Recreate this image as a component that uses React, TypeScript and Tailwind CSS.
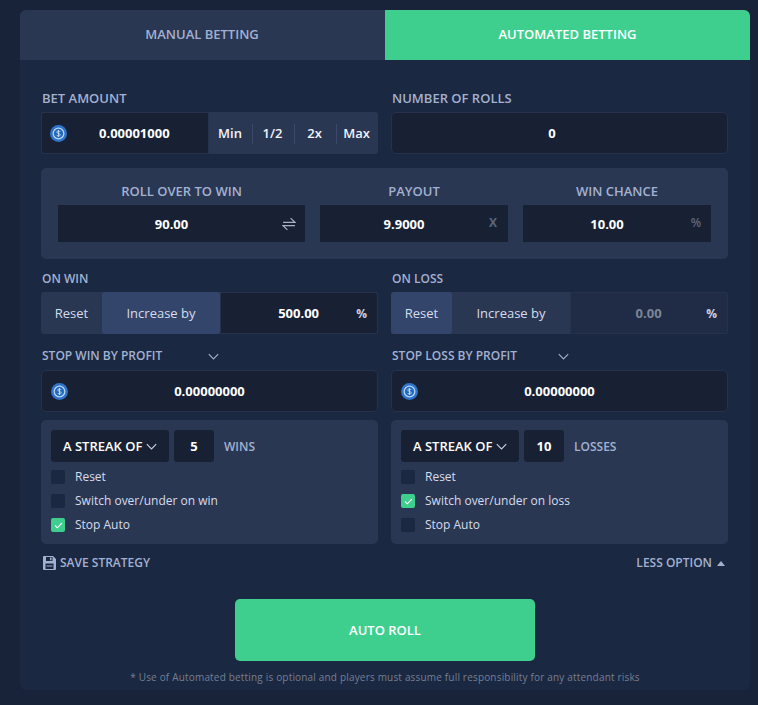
import React from 'react';

const UsdcIcon = () => (
  <svg width="17" height="17" viewBox="0 0 32 32" className="shrink-0">
    <circle cx="16" cy="16" r="16" fill="#2f74c8" />
    <circle cx="16" cy="16" r="10" fill="#2468b8" stroke="#b9d6f5" strokeWidth="2.4" />
    <path d="M19.2 13c-.5-1.2-1.6-1.8-3.2-1.8-1.8 0-3 .9-3 2.3 0 3.2 6.2 1.7 6.2 4.9 0 1.5-1.4 2.4-3.2 2.4-1.6 0-2.9-.7-3.3-2M16 9.4v13.2" fill="none" stroke="#cfe3f8" strokeWidth="1.6" />
  </svg>
);

const Chevron = ({ className }: { className: string }) => (
  <svg viewBox="0 0 14 8" fill="none" stroke="currentColor" strokeWidth="1.4" className={className}>
    <path d="M1 1l6 6 6-6" />
  </svg>
);

const Label = ({ children }: { children: React.ReactNode }) => (
  <div className="h-[14px] pl-[1px] leading-[14px] text-[12px] font-semibold text-[#a3b1d1]">{children}</div>
);

const Check = ({ checked, label }: { checked?: boolean; label: string }) => (
  <div className="flex items-center h-[14px] gap-[10px]">
    {checked ? (
      <div className="w-[14px] h-[14px] rounded-[2px] bg-[#3ecf8e] flex items-center justify-center">
        <svg width="9" height="7" viewBox="0 0 9 7" fill="none" stroke="#fff" strokeWidth="1.1">
          <path d="M1 3.5l2.3 2.3L8 1" />
        </svg>
      </div>
    ) : (
      <div className="w-[14px] h-[14px] rounded-[2px] bg-[#1b2841]" />
    )}
    <span className="text-[12px] text-[#d5dcec]">{label}</span>
  </div>
);

const Segment = ({ active, value, dim }: { active: 'reset' | 'increase'; value: string; dim?: boolean }) => (
  <div className="flex h-[42px] rounded-[3px] bg-[#2a3753] text-[13px] text-[#d5dcec]">
    <div className={`w-[61px] shrink-0 pt-[1px] flex items-center justify-center rounded-[3px] ${active === 'reset' ? 'bg-[#33456a]' : ''}`}>Reset</div>
    <div className={`w-[118px] shrink-0 pt-[1px] flex items-center justify-center rounded-[3px] ${active === 'increase' ? 'bg-[#33456a]' : ''}`}>Increase by</div>
    <div className={`flex-1 min-w-0 pt-[1px] flex items-center border border-[#26324c] rounded-r-[3px] ${dim ? 'bg-[#202c46]' : 'bg-[#182133]'}`}>
      <span className={`w-[136px] pl-[20px] text-center font-bold text-[13px] ${dim ? 'text-[#7b8598]' : 'text-white'}`}>{value}</span>
      <span className="flex-1 pr-[10px] text-right font-bold text-[12px] text-[#c9d1e3]">%</span>
    </div>
  </div>
);

const ProfitInput = () => (
  <div className="relative h-[42px] pt-[1px] rounded-[5px] bg-[#182133] border border-[#26324c] flex items-center justify-center">
    <span className="absolute left-[9px] top-[12px] flex"><UsdcIcon /></span>
    <span className="text-[13px] font-bold text-white">0.00000000</span>
  </div>
);

const Streak = ({ value, unit, checks }: { value: string; unit: string; checks: [string, boolean][] }) => (
  <div className="h-[124px] rounded-[5px] bg-[#2a3753] pt-[10px] pl-[10px]">
    <div className="flex h-[32px] items-stretch gap-[5px] mb-[8px]">
      <div className="w-[118px] pt-[1px] rounded-[3px] bg-[#182133] flex items-center pl-[12px] gap-[4px] text-[13px] font-semibold text-white">
        A STREAK OF <Chevron className="w-[11px] h-[7px] text-[#c9d1e3]" />
      </div>
      <div className="w-[40px] pt-[1px] rounded-[3px] bg-[#182133] flex items-center justify-center text-[13px] font-bold text-white">{value}</div>
      <div className="ml-[5px] pt-[1px] flex items-center text-[12px] font-semibold text-[#a3b1d1]">{unit}</div>
    </div>
    <div className="flex flex-col gap-[10px]">
      {checks.map(([label, checked]) => (
        <Check key={label} label={label} checked={checked} />
      ))}
    </div>
  </div>
);

const OddsField = ({ title, value, width, suffix }: { title: string; value: string; width: string; suffix: React.ReactNode }) => (
  <div className={width}>
    <div className="h-[14px] leading-[14px] text-center text-[13px] font-semibold text-[#a3b1d1] mb-[7px]">{title}</div>
    <div className="relative h-[37px] pt-[2px] bg-[#182133] flex items-center justify-center pr-[20px]">
      <span className="text-[13px] font-bold text-white">{value}</span>
      <span className="absolute right-[10px] top-[9px] text-[12px] font-semibold text-[#5c667c]">{suffix}</span>
    </div>
  </div>
);

export default function App() {
  return (
    <div className="w-[758px] h-[705px] bg-[#18233a] pt-[10px] pl-[20px] font-['Open_Sans',sans-serif] overflow-hidden">
      <div className="w-[730px] h-[680px] rounded-[6px] bg-[#1b2841] overflow-hidden">
        {/* tabs */}
        <div className="flex h-[50px] text-[13px] font-semibold">
          <div className="w-[365px] bg-[#2a3753] flex items-center justify-center pr-[1px] text-[#a3b1d1]">MANUAL BETTING</div>
          <div className="w-[365px] bg-[#3ecf8e] flex items-center justify-center text-white">AUTOMATED BETTING</div>
        </div>

        <div className="pl-[21px] pr-[22px] pt-[31px]">
          <div className="grid grid-cols-[337px_337px] gap-x-[13px]">
            <div>
              <div className="h-[14px] pl-[1px] leading-[14px] text-[13px] font-semibold text-[#a3b1d1]">BET AMOUNT</div>
              <div className="mt-[7px] flex h-[42px] rounded-[3px] bg-[#2a3753]">
                <div className="w-[168px] pt-[1px] bg-[#182133] border border-[#26324c] rounded-l-[3px] flex items-center pl-[8px]">
                  <UsdcIcon />
                  <span className="ml-[32px] text-[13px] font-bold text-white">0.00001000</span>
                </div>
                <div className="flex-1 pt-[1px] flex items-center pl-[1px] text-[13px] font-semibold text-[#f0f3f9]">
                  {['Min', '1/2', '2x', 'Max'].map((t, i) => (
                    <div key={t} className={`w-[42px] h-[20px] pr-[2px] flex items-center justify-center ${i > 0 ? 'border-l border-[#3b4868]' : ''}`}>
                      {t}
                    </div>
                  ))}
                </div>
              </div>
            </div>
            <div>
              <div className="h-[14px] pl-[1px] leading-[14px] text-[13px] font-semibold text-[#a3b1d1]">NUMBER OF ROLLS</div>
              <div className="mt-[7px] h-[42px] pt-[1px] rounded-[5px] bg-[#182133] border border-[#26324c] flex items-center justify-center pr-[15px] text-[13px] font-bold text-white">0</div>
            </div>
          </div>

          {/* roll over / payout / chance */}
          <div className="mt-[14px] h-[91px] rounded-[5px] bg-[#2a3753] pt-[16px] pl-[17px] flex gap-[15px]">
            <OddsField
              title="ROLL OVER TO WIN"
              value="90.00"
              width="w-[247px]"
              suffix={
                <svg width="14" height="14" viewBox="0 0 13 13" fill="none" stroke="#a9b1c0" strokeWidth="1.1" className="mt-[3px] -mr-[1px]">
                  <path d="M1 5h11L8 1M12 8H1l4 4" />
                </svg>
              }
            />
            <OddsField title="PAYOUT" value="9.9000" width="w-[188px]" suffix={<span className="mr-[1px] font-bold">X</span>} />
            <OddsField title="WIN CHANCE" value="10.00" width="w-[188px]" suffix="%" />
          </div>

          <div className="mt-[13px] grid grid-cols-[337px_337px] gap-x-[13px]">
            <div>
              <Label>ON WIN</Label>
              <div className="mt-[6px]"><Segment active="increase" value="500.00" /></div>
              <div className="mt-[15px] h-[14px] flex items-center">
                <Label>STOP WIN BY PROFIT</Label>
                <Chevron className="ml-[46px] w-[11px] h-[7px] text-[#a3b1d1]" />
              </div>
              <div className="mt-[7px]"><ProfitInput /></div>
              <div className="mt-[8px]">
                <Streak value="5" unit="WINS" checks={[['Reset', false], ['Switch over/under on win', false], ['Stop Auto', true]]} />
              </div>
            </div>
            <div>
              <Label>ON LOSS</Label>
              <div className="mt-[6px]"><Segment active="reset" value="0.00" dim /></div>
              <div className="mt-[15px] h-[14px] flex items-center">
                <Label>STOP LOSS BY PROFIT</Label>
                <Chevron className="ml-[41px] w-[11px] h-[7px] text-[#a3b1d1]" />
              </div>
              <div className="mt-[7px]"><ProfitInput /></div>
              <div className="mt-[8px]">
                <Streak value="10" unit="LOSSES" checks={[['Reset', false], ['Switch over/under on loss', true], ['Stop Auto', false]]} />
              </div>
            </div>
          </div>

          <div className="mt-[12px] flex justify-between items-center h-[14px] text-[12px] font-semibold text-[#a3b1d1]">
            <div className="flex items-center gap-[4px] pl-[2px]">
              <svg width="13" height="14" viewBox="0 0 13 14" fill="#a3b1d1">
                <path fillRule="evenodd" d="M1 0h9l3 3v10a1 1 0 0 1-1 1H1a1 1 0 0 1-1-1V1a1 1 0 0 1 1-1zm2 1v4h6.5V1zM7 1.6h1.5v2.6H7zM2.5 7.5v5.5h8V7.5zM3.5 9.4h6v1.2h-6z" />
              </svg>
              SAVE STRATEGY
            </div>
            <div className="flex items-center gap-[5px] pr-[3px]">
              LESS OPTION
              <svg width="8" height="5" viewBox="0 0 8 5" fill="#a3b1d1">
                <path d="M4 0l4 5H0z" />
              </svg>
            </div>
          </div>
        </div>

        <div className="mt-[29px] flex justify-center">
          <div className="w-[300px] h-[62px] pt-[1px] rounded-[5px] bg-[#3ecf8e] flex items-center justify-center text-[13px] font-semibold text-white">AUTO ROLL</div>
        </div>
        <div className="mt-[9px] text-center text-[10px] leading-[14px] tracking-[0.18px] text-[#757f93]">
          * Use of Automated betting is optional and players must assume full responsibility for any attendant risks
        </div>
      </div>
    </div>
  );
}
